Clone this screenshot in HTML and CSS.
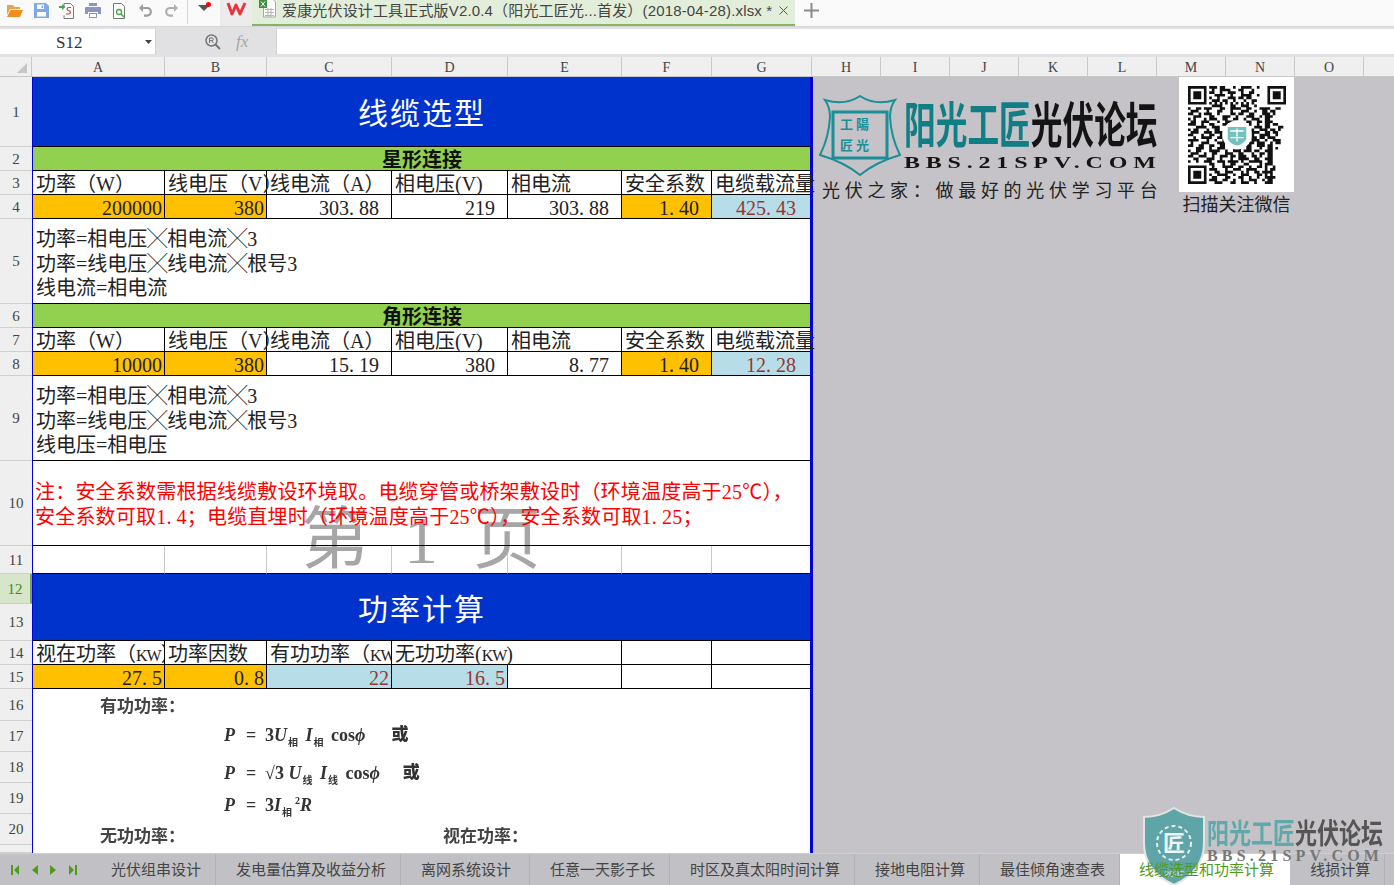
FILE: index.html
```html
<!DOCTYPE html>
<html lang="zh-CN">
<head>
<meta charset="utf-8">
<title>爱康光伏设计工具</title>
<link rel="stylesheet" href="styles.css">
</head>
<body>
<div class="app">
  <header class="toolbar">
    <div class="qat">
      <span class="qbtn"><svg width="16" height="14" viewBox="0 0 16 14"><path fill="#e8a24c" d="M0 1h6l1.500 2H13v2H3L0 11z"/><path fill="#f28c1e" d="M3.500 6H16l-3 7H0z"/></svg></span>
      <span class="qbtn"><svg width="15" height="15" viewBox="0 0 15 15"><path fill="#7fa9e6" d="M0 0h12l3 3v12H0z"/><path fill="#fff" d="M3 1.500h7V6H3zM3 9h9v4.500H3z"/><path fill="#7fa9e6" d="M7.500 2.500h1.500v2.500H7.500z"/></svg></span>
      <span class="qbtn"><svg width="16" height="16" viewBox="0 0 16 16"><path fill="none" stroke="#777" d="M5 3.500V.5h6.500l3 3v12h-9.500v-3"/><path fill="none" stroke="#c4434a" stroke-width="1.200" d="M7 11h2.500c2.500 0 2.500-3 0-3.500-2-.5-2-3 .5-3H12"/><path fill="#4aa54a" d="M0 3h3V1l3.500 3L3 7V5H0z"/></svg></span>
      <span class="qbtn"><svg width="16" height="15" viewBox="0 0 16 15"><path fill="#8d94c4" d="M4 0h8v3H4zM1 4h14a1 1 0 0 1 1 1v6h-3V9H3v2H0V5a1 1 0 0 1 1-1zM4 10h8v5H4z"/><path fill="#fff" d="M5 11h6v3H5z"/></svg></span>
      <span class="qbtn"><svg width="15" height="16" viewBox="0 0 15 16"><path fill="none" stroke="#777" d="M1.500.5h8l3 3v12h-11z"/><circle cx="7" cy="9" r="2.500" fill="none" stroke="#4aa54a" stroke-width="1.300"/><path stroke="#4aa54a" stroke-width="1.600" d="M9 11l3 3"/></svg></span>
      <span class="qbtn"><svg width="13" height="13" viewBox="0 0 13 13"><path fill="none" stroke="#9c9c9c" stroke-width="2.200" d="M2.500 4H8a3.800 3.800 0 0 1 0 7.600H5"/><path fill="#9c9c9c" d="M0 4l4-4v8z"/></svg></span>
      <span class="qbtn"><svg width="13" height="13" viewBox="0 0 13 13"><path fill="none" stroke="#b0b0b0" stroke-width="2.200" d="M10.500 4H5a3.800 3.800 0 0 0 0 7.600H8"/><path fill="#b0b0b0" d="M13 4L9 0v8z"/></svg></span>
    </div>
    <span class="qsep"></span>
    <span class="qmenu"><svg width="12" height="6" viewBox="0 0 12 6"><path fill="#555" d="M0 0h12L6 6z"/></svg><i class="reddot"></i></span>
    <span class="wps"><svg width="21" height="15" viewBox="0 0 21 15"><path fill="none" stroke="#e8343c" stroke-width="3" stroke-linejoin="round" d="M2 2l4 11 4-9 4 9 5-11"/></svg></span>
    <div class="filetab">
      <svg class="xls" width="17" height="20" viewBox="0 0 17 20"><path fill="#fff" stroke="#a9a9a9" d="M4.500-2h8l4 4v15h-12z"/><path fill="none" stroke="#b5b5b5" d="M6 9.500h9M6 12.500h9M6 15.500h9M9 8v9M12 8v9"/><path fill="#3f8f3f" d="M0 0h8v8H0z"/><path stroke="#fff" d="M2 1.500l4 5M6 1.500l-4 5"/></svg>
      <span class="filename">爱康光伏设计工具正式版V2.0.4（阳光工匠光...首发）(2018-04-28).xlsx *</span>
      <svg class="fileclose" width="9" height="9" viewBox="0 0 9 9"><path stroke="#555" d="M.5.5l8 8M8.500.5l-8 8"/></svg>
    </div>
    <svg class="plus" width="15" height="15" viewBox="0 0 15 15"><path fill="#8c8c8c" d="M6.500 0h2v6.500H15v2H8.500V15h-2V8.500H0v-2h6.500z"/></svg>
  </header>

  <div class="formula">
    <div class="namebox"><span>S12</span><svg width="7" height="4" viewBox="0 0 7 4"><path fill="#444" d="M0 0h7L3.500 4z"/></svg></div>
    <div class="fxbtns">
      <svg width="16" height="16" viewBox="0 0 16 16"><circle cx="6.500" cy="6.500" r="5.500" fill="none" stroke="#777" stroke-width="1.500"/><path stroke="#777" stroke-width="2" d="M10.500 10.500l4.500 4.500"/><path fill="none" stroke="#777" d="M4.500 9V4h2.500a1.300 1.300 0 0 1 0 2.600H4.500M6.500 6.600L8.500 9"/></svg>
      <span class="fx">fx</span>
    </div>
    <div class="fxinput"></div>
  </div>

  <div class="colheads">
    <div class="corner"><svg width="10" height="10" viewBox="0 0 10 10"><path fill="#c6c6c6" d="M10 0v10H0z"/></svg></div>
    <div class="ch">A</div><div class="ch">B</div><div class="ch">C</div><div class="ch">D</div><div class="ch">E</div><div class="ch">F</div><div class="ch">G</div><div class="ch">H</div><div class="ch">I</div><div class="ch">J</div><div class="ch">K</div><div class="ch">L</div><div class="ch">M</div><div class="ch">N</div><div class="ch">O</div><div class="ch end"></div>
  </div>

  <main class="workspace">
    <div class="rowheads">
      <div class="rh">1</div><div class="rh">2</div><div class="rh">3</div><div class="rh">4</div><div class="rh">5</div><div class="rh">6</div><div class="rh">7</div><div class="rh">8</div><div class="rh">9</div><div class="rh">10</div><div class="rh">11</div><div class="rh on">12</div><div class="rh">13</div><div class="rh">14</div><div class="rh">15</div><div class="rh">16</div><div class="rh">17</div><div class="rh">18</div><div class="rh">19</div><div class="rh">20</div><div class="rh"></div>
    </div>

    <section class="sheet">
      <div class="grid">
        <div class="c all title">线缆选型</div>
        <div class="c all sub">星形连接</div>

        <div class="c">功率（W）</div><div class="c">线电压（V）</div><div class="c">线电流（A）</div><div class="c">相电压(V)</div><div class="c">相电流</div><div class="c">安全系数</div><div class="c last">电缆载流量</div>
        <div class="c r in">200000</div><div class="c r in">380</div><div class="c r p">303<i class="d">.</i>88</div><div class="c r p">219</div><div class="c r p">303<i class="d">.</i>88</div><div class="c r p in">1<i class="d">.</i>40</div><div class="c r p res far last">425<i class="d">.</i>43</div>
        <div class="c all note">功率=相电压╳相电流╳3<br>功率=线电压╳线电流╳根号3<br>线电流=相电流</div>

        <div class="c all sub">角形连接</div>
        <div class="c">功率（W）</div><div class="c">线电压（V）</div><div class="c">线电流（A）</div><div class="c">相电压(V)</div><div class="c">相电流</div><div class="c">安全系数</div><div class="c last">电缆载流量</div>
        <div class="c r in">10000</div><div class="c r in">380</div><div class="c r p">15<i class="d">.</i>19</div><div class="c r p">380</div><div class="c r p">8<i class="d">.</i>77</div><div class="c r p in">1<i class="d">.</i>40</div><div class="c r p res far last">12<i class="d">.</i>28</div>
        <div class="c all note">功率=相电压╳相电流╳3<br>功率=线电压╳线电流╳根号3<br>线电压=相电压</div>

        <div class="c all warn">注：安全系数需根据线缆敷设环境取。电缆穿管或桥架敷设时（环境温度高于25℃），<br>安全系数可取1<i class="d">.</i>4；电缆直埋时（环境温度高于25℃），安全系数可取1<i class="d">.</i>25；</div>

        <div class="c faint"></div><div class="c faint"></div><div class="c faint"></div><div class="c faint"></div><div class="c faint"></div><div class="c faint"></div><div class="c faint last"></div>

        <div class="c all title front">功率计算</div>

        <div class="c clip">视在功率（<i class="n">KW</i>）</div><div class="c clip">功率因数</div><div class="c clip">有功功率（<i class="n">KW</i>）</div><div class="c wide">无功功率(<i class="n">KW</i>)</div><div class="c"></div><div class="c last"></div>
        <div class="c r in">27<i class="d">.</i>5</div><div class="c r in">0<i class="d">.</i>8</div><div class="c r res">22</div><div class="c r res">16<i class="d">.</i>5</div><div class="c"></div><div class="c"></div><div class="c last"></div>

        <div class="all pic">
          <div class="pl first"><b class="ph">有功功率：</b></div>
          <div class="pl eq two"><i>P</i><s>=</s><em>3<i>U</i><sub>相</sub> <i>I</i><sub>相</sub> cos<i>ϕ</i></em><b class="or">或</b></div>
          <div class="pl eq three"><i>P</i><s>=</s><em>√3 <i>U</i><sub>线</sub> <i>I</i><sub>线</sub> cos<i>ϕ</i></em><b class="or2">或</b></div>
          <div class="pl eq"><i>P</i><s>=</s><em>3<i>I</i><sub>相</sub><sup>2</sup><i>R</i></em></div>
          <div class="pl split"><b class="ph">无功功率：</b><b class="ph">视在功率：</b></div>
        </div>
      </div>
      <div class="pagemark">第 1 页</div>
    </section>

    <aside class="float logo">
      <svg class="shield" width="82" height="81" viewBox="0 0 82 81">
        <path fill="none" stroke="#1a8f98" stroke-width="2" d="M41 1Q26 11 6 5q5 7 5 17Q10 42 1 60q24 7 40 20 16-13 40-20-9-18-10-38 0-10 5-17-20 6-35-4z"/>
        <path fill="none" stroke="#1a8f98" stroke-width="3" d="M14 17h54v46H14z"/>
        <text x="21" y="34" class="shieldt">工 陽</text>
        <text x="21" y="55" class="shieldt">匠 光</text>
      </svg>
      <div class="brand"><span class="teal">阳光工匠</span><span>光伏论坛</span></div>
      <div class="bbs">BBS.21SPV.COM</div>
      <div class="slogan">光伏之家：做最好的光伏学习平台</div>
    </aside>

    <aside class="float qr">
      <svg class="qrcode" width="98" height="98" viewBox="0 0 37 37">
        <path fill="#111" fill-rule="evenodd" d="M0 0h7v7H0zM1 1v5h5V1zM2 2h3v3H2zM30 0h7v7h-7zM31 1v5h5V1zM32 2h3v3h-3zM0 30h7v7H0zM1 31v5h5v-5zM2 32h3v3H2z"/>
        <path fill="none" stroke="#111" d="M8 .5h3m1 0h2m3 0h1m2 0h4m2 0h1M9 1.500h1m2 0h4m3 0h2m3 0h1M8 2.500h2m2 0h1m2 0h3m2 0h1m2 0h2M10 3.500h4m2 0h1m3 0h4m2 0h1M8 4.500h1m2 0h1m3 0h3m1 0h2m1 0h2M9 5.500h3m1 0h2m2 0h1m3 0h1m2 0h2M8 6.500h1m1 0h1m1 0h1m1 0h1m1 0h1m1 0h1m1 0h1m1 0h1m1 0h1M9 7.500h4m3 0h2m2 0h3m2 0h1M0 8.500h1m2 0h2m1 0h3m3 0h2m2 0h4m2 0h2m3 0h4m2 0h2M1 9.500h3m3 0h1m3 0h2m3 0h1m3 0h3m2 0h1m2 0h2m1 0h2M0 10.500h2m2 0h1m1 0h3m2 0h1m4 0h2m1 0h2m2 0h2m3 0h3m1 0h1M2 11.500h3m3 0h2m3 0h3m2 0h1m3 0h3m2 0h1m1 0h3M0 12.500h1m1 0h1m3 0h1m1 0h3m2 0h2m2 0h2m2 0h1m2 0h3m2 0h2M1 13.500h2m2 0h3m3 0h1m2 0h3m5 0h2m2 0h2m1 0h3M0 14.500h3m2 0h1m2 0h2m3 0h2m8 0h1m2 0h1m2 0h2m1 0h2M3 15.500h4m2 0h3m3 0h1m9 0h3m1 0h2m3 0h2M0 16.500h1m1 0h2m3 0h1m2 0h2m2 0h1m9 0h1m2 0h3m1 0h2m1 0h1M1 17.500h3m2 0h3m1 0h3m11 0h3m2 0h2m1 0h2M0 18.500h2m3 0h1m2 0h2m2 0h1m11 0h1m2 0h4m2 0h1M2 19.500h1m2 0h4m2 0h2m11 0h2m1 0h2m1 0h3M0 20.500h4m3 0h1m2 0h1m2 0h2m9 0h3m2 0h1m2 0h3M1 21.500h1m3 0h3m3 0h3m1 0h1m7 0h2m1 0h3m2 0h1m1 0h2M0 22.500h2m2 0h2m2 0h2m2 0h2m2 0h1m2 0h1m2 0h2m2 0h3m1 0h2M3 23.500h3m2 0h1m2 0h3m3 0h3m2 0h2m3 0h1m2 0h2m1 0h1M0 24.500h1m2 0h2m3 0h4m2 0h1m2 0h3m1 0h3m1 0h2m2 0h3M1 25.500h3m2 0h1m2 0h2m3 0h3m2 0h2m3 0h1m2 0h2m1 0h2M0 26.500h2m2 0h3m2 0h1m2 0h3m1 0h2m1 0h3m2 0h2m1 0h1m2 0h2M2 27.500h2m3 0h3m2 0h1m3 0h1m2 0h4m2 0h2m2 0h3M0 28.500h1m2 0h1m2 0h3m2 0h3m1 0h4m1 0h1m2 0h5m2 0h2M8 29.500h2m3 0h1m2 0h2m3 0h2m4 0h1m1 0h3M9 30.500h1m3 0h4m2 0h2m2 0h1m2 0h2m1 0h1m2 0h1M8 31.500h3m3 0h1m2 0h3m2 0h4m3 0h1m1 0h2M10 32.500h2m2 0h3m3 0h1m1 0h1m2 0h2m1 0h4M8 33.500h1m2 0h4m2 0h1m2 0h3m3 0h2m1 0h1m1 0h1M9 34.500h2m3 0h2m3 0h2m2 0h1m2 0h1m2 0h4M8 35.500h3m2 0h2m2 0h1m2 0h1m2 0h3m2 0h1m1 0h2M10 36.500h3m3 0h2m2 0h3m2 0h1m3 0h3"/>
        <circle cx="18.500" cy="18.500" r="5.500" fill="#fff"/>
        <path fill="#74c0bd" d="M15 15.500h7v4.500q-1 2-3.500 2.500-2.500-.5-3.500-2.500z"/>
        <path fill="none" stroke="#fff" stroke-width=".5" d="M16 17h5M16 19.500h5M18.500 16v5"/>
      </svg>
      <div class="qrcap">扫描关注微信</div>
    </aside>
  </main>

  <footer class="tabbar">
    <div class="nav">
      <svg width="9" height="10" viewBox="0 0 9 10"><path fill="#4f9a1c" d="M0 0h2v10H0zM8 0v10L3 5z"/></svg>
      <svg width="6" height="10" viewBox="0 0 6 10"><path fill="#4f9a1c" d="M6 0v10L0 5z"/></svg>
      <svg width="6" height="10" viewBox="0 0 6 10"><path fill="#4f9a1c" d="M0 0v10l6-5z"/></svg>
      <svg width="9" height="10" viewBox="0 0 9 10"><path fill="#4f9a1c" d="M7 0h2v10H7zM1 0v10l5-5z"/></svg>
    </div>
    <div class="tab">光伏组串设计</div>
    <div class="tab">发电量估算及收益分析</div>
    <div class="tab wider">离网系统设计</div>
    <div class="tab">任意一天影子长</div>
    <div class="tab">时区及真太阳时间计算</div>
    <div class="tab">接地电阻计算</div>
    <div class="tab">最佳倾角速查表</div>
    <div class="tab active"><span>线缆选型和功率计算</span></div>
    <div class="tab">线损计算</div>
    <div class="wm">
      <svg class="wmshield" width="62" height="79" viewBox="0 0 62 79">
        <path fill="#5fa5a8" stroke="#e4e4e6" stroke-width="2" d="M31 1q14 9 30 9v26q0 28-30 42Q1 64 1 36V10q16 0 30-9z"/>
        <circle cx="31" cy="36" r="17" fill="none" stroke="#e4eeee" stroke-width="2" stroke-dasharray="4 3"/>
        <text x="31" y="44" class="wmlogo">匠</text>
        <text x="31" y="70" class="wmyear">2007</text>
      </svg>
      <div class="wmtext">
        <div class="wmbrand"><span class="wmteal">阳光工匠</span><span>光伏论坛</span></div>
        <div class="wmbbs">BBS.21SPV.COM</div>
      </div>
    </div>
  </footer>
</div>
</body>
</html>
```
FILE: styles.css
```css
* { box-sizing: border-box; }
html, body { margin: 0; height: 100%; }
body { background: #e1e1e3; overflow: hidden; font-family: "Liberation Sans", "Noto Sans CJK SC", sans-serif; }
.app { width: 1394px; height: 885px; display: flex; flex-direction: column; overflow: hidden; }

/* title bar */
.toolbar { height: 26px; flex: none; display: flex; align-items: stretch; background: #fafafa; }
.qat { display: flex; padding-left: 2px; }
.qbtn { width: 26px; display: flex; align-items: center; justify-content: center; padding-bottom: 5px; }
.qsep { width: 1px; height: 24px; margin-left: 3px; background: #d4d4d4; }
.qmenu { width: 32px; position: relative; display: flex; align-items: center; justify-content: center; padding: 0 0 10px 0; }
.reddot { position: absolute; left: 18px; top: 2px; width: 5px; height: 5px; border-radius: 50%; background: #f00; }
.wps { width: 32px; background: #ececec; display: flex; justify-content: center; padding-top: 1px; }
.filetab { width: 543px; display: flex; align-items: flex-start; padding-left: 7px; background: #e2eed9; border-bottom: 2px solid #84b465; position: relative; }
.xls { flex: none; }
.filename { margin-left: 6px; font-size: 15px; line-height: 21px; color: #444; white-space: nowrap; letter-spacing: .16px; }
.fileclose { position: absolute; left: 527px; top: 6px; }
.plus { margin: 3px 0 0 9px; }

/* formula bar */
.formula { height: 31px; flex: none; display: flex; padding: 2px 0 3px; background: #e1e1e3; border-top: 1px solid #d6d6d6; }
.namebox { width: 156px; background: #fff; display: flex; align-items: center; justify-content: flex-end; gap: 0; padding-right: 3px; border-right: 1px solid #d0d0d0; position: relative; }
.namebox span { position: absolute; left: 56px; top: 3px; font: 17px/22px "Liberation Serif", serif; color: #333; }
.fxbtns { width: 120px; display: flex; align-items: center; padding-left: 49px; gap: 15px; }
.fx { font: italic 17px/20px "Liberation Serif", serif; color: #a5a5a5; }
.fxinput { flex: 1; background: #fff; border-left: 1px solid #d0d0d0; }

/* column headers */
.colheads { height: 20px; flex: none; display: grid; grid-template-columns: 32px 133px 102px 125px 116px 114px 90px 100px repeat(8, 69px) 1fr; background: #efefef; border-bottom: 1px solid #c8c8c8; }
.corner { display: flex; justify-content: flex-end; align-items: center; padding-right: 4px; border-right: 1px solid #c8c8c8; }
.ch { font: 14px/21px "Liberation Serif", serif; text-align: center; color: #444; border-right: 1px solid #c8c8c8; }
.ch.end { border-right: 0; }

/* body */
.workspace { flex: 1; min-height: 0; display: flex; position: relative; background: #c5c3c7; overflow: hidden; }
.rowheads { width: 32px; flex: none; display: grid; grid-template-rows: 70px 24px 24px 24px 85px 24px 24px 24px 85px 85px 28px 30px 37px 24px 24px 32px 31px 31px 31px 31px 8px; background: #efefef; }
.rh { font: 15px/1 "Liberation Serif", serif; color: #444; display: flex; align-items: center; justify-content: center; padding-top: 1px; border-bottom: 1px solid #cfcfcf; }
.rh.on { background: #d7e6cb; color: #3f8a17; border-right: 2px solid #74a852; }

.sheet { width: 781px; flex: none; position: relative; background: #fff; border-left: 1px solid #0000d8; border-right: 3px solid #0000d8; }
.grid { display: grid; grid-template-columns: 132px 102px 125px 116px 114px 90px 98px; grid-template-rows: 70px 24px 24px 24px 85px 24px 24px 24px 85px 85px 28px 67px 24px 24px 164px; font: 20px/23px "Liberation Serif", "Noto Sans CJK SC", serif; color: #222; }
.c { padding: 2px 2px 0 3px; white-space: nowrap; border-right: 1px solid #000; border-bottom: 1px solid #000; overflow: visible; min-width: 0; }
.last { border-right: 0; }
.all { grid-column: 1 / -1; border-right: 0; }
.clip { overflow: hidden; }
.wide { grid-column: span 2; }
.n { font-style: normal; font-size: 16px; letter-spacing: -1px; }
.title { background: #0033cc; color: #fff; font-size: 30px; line-height: 69px; letter-spacing: 2px; text-align: center; }
.front { position: relative; z-index: 2; line-height: 67px; }
.sub { background: #92d050; text-align: center; font-weight: 700; color: #111; }
.r { text-align: right; padding-right: 2px; }
.p { padding-right: 12px; }
.far { padding-right: 14px; }
.in { background: #ffc000; }
.res { background: #b7dde8; color: #953734; }
.d { font-style: normal; padding-right: 5px; }
.note { line-height: 24.500px; padding-top: 8px; white-space: normal; }
.warn { color: #ff0000; line-height: 25px; padding: 19px 0 0 2px; letter-spacing: .2px; position: relative; z-index: 1; }
.faint { border-right-color: #c8c8c8; }

/* pasted formula image */
.pic { grid-column: 1 / -1; overflow: hidden; padding-left: 67px; color: #333; }
.pl { height: 32px; line-height: 32px; white-space: nowrap; filter: blur(.4px); }
.ph { font-size: 17px; font-weight: 700; color: #444; }
.eq { padding-left: 124px; font: 700 18px/32px "Liberation Serif", "Noto Sans CJK SC", serif; display: flex; color: #333; }
.eq i { font-style: italic; }
.eq s { text-decoration: none; width: 41px; padding-left: 22px; flex: none; }
.eq > i { width: 0; }
.eq em { font-style: normal; white-space: pre; }
.eq sub { font-size: 10px; line-height: 0; margin: 0 3px 0 1px; }
.eq sup { font-size: 10px; line-height: 0; }
.two { margin-top: -2px; }
.three { margin-top: 6px; }
.or { margin-left: 26px; font-size: 17px; }
.or2 { margin-left: 23px; font-size: 17px; }
.split { display: flex; gap: 258px; }

.pagemark { position: absolute; left: 268px; top: 419px; font: 68px/88px "Liberation Serif", "Noto Sans CJK SC", serif; color: #a6a6a6; white-space: pre; z-index: 0; word-spacing: 18px; }

/* floating pictures on the sheet */
.float { position: absolute; }
.logo { left: 819px; top: 18px; width: 345px; height: 110px; color: #141414; }
.shield { position: absolute; left: 0; top: 0; }
.shieldt { font: 700 13px "Noto Sans CJK SC", sans-serif; fill: #1a8f98; }
.brand { position: absolute; left: 85px; top: -2px; width: 254px; display: flex; font: 700 31.700px/36px "Noto Sans CJK SC", sans-serif; transform: scaleY(1.550); transform-origin: top left; white-space: nowrap; }
.teal { color: #117e86; }
.bbs { position: absolute; left: 85px; top: 60px; width: 256px; font: 700 24px/14px "Liberation Serif", serif; letter-spacing: 5.800px; white-space: nowrap; transform: scaleY(.72); }
.slogan { position: absolute; left: 3px; top: 81px; font: 18px/26px "Noto Sans CJK SC", sans-serif; letter-spacing: 4.700px; white-space: nowrap; color: #222; }
.qr { left: 1179px; top: 0; width: 115px; }
.qrcode { display: block; width: 115px; height: 115px; padding: 8px 8px 7px 9px; background: #fff; filter: blur(.5px); }
.qrcap { font: 18px/22px "Noto Sans CJK SC", sans-serif; color: #222; text-align: center; white-space: nowrap; }

/* sheet tabs */
.tabbar { height: 32px; flex: none; display: flex; align-items: stretch; position: relative; background: #c1c1c5; border-top: 1px solid #cfcfd2; }
.nav { width: 91px; display: flex; align-items: center; padding: 0 0 0 11px; gap: 12px; }
.tab { position: relative; z-index: 2; padding: 0 14px 0 20px; font-size: 15px; line-height: 31px; color: #444; white-space: nowrap; border-right: 1px solid #b2b2b6; }
.tab.wider { padding-right: 18px; }
.tab.active { position: static; z-index: auto; background: #fff; color: #4f9a1c; border-right: 0; padding: 0 16px 0 19px; }
.tab.active span { position: relative; z-index: 2; }
.wm { position: absolute; left: 1143px; top: -47px; width: 245px; height: 79px; display: flex; z-index: 1; pointer-events: none; }
.wmlogo { font: 700 22px "Noto Sans CJK SC", sans-serif; fill: #eef5f5; text-anchor: middle; }
.wmyear { font: 9px "Liberation Sans", sans-serif; fill: #e4eeee; text-anchor: middle; }
.wmtext { margin-left: 2px; }
.wmbrand { display: flex; margin-top: 6px; font: 700 22px/28px "Noto Sans CJK SC", sans-serif; color: #555; transform: scaleY(1.300); transform-origin: top left; white-space: nowrap; }
.wmteal { color: #5fa9ab; }
.wmbbs { margin-top: 8px; font: 700 16px/14px "Liberation Serif", serif; letter-spacing: 4.200px; color: #777; white-space: nowrap; }
```
